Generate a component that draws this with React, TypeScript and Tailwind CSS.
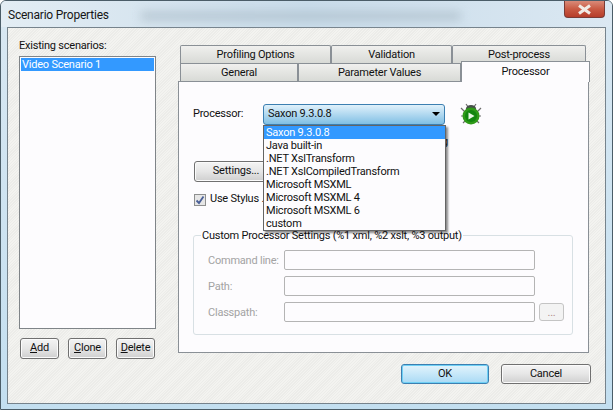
const processors = [
  'Saxon 9.3.0.8',
  'Java built-in',
  '.NET XslTransform',
  '.NET XslCompiledTransform',
  'Microsoft MSXML',
  'Microsoft MSXML 4',
  'Microsoft MSXML 6',
  'custom',
];

const buttonClass =
  'flex items-center justify-center rounded-[3px] border border-[#707070] bg-gradient-to-b from-[#f4f4f4] from-0% via-[#e6e6e6] via-50% to-[#cfcfcf] to-100% text-[11px] text-[#111] shadow-[inset_0_0_0_1px_#fbfbfb]';

const tabClass =
  'flex items-center justify-center border border-b-0 border-[#8a9096] bg-gradient-to-b from-[#f0f0ee] to-[#d8dad6] pt-[2px] text-[11px] text-[#111]';

function BugIcon() {
  return (
    <svg width="22" height="22" viewBox="0 0 22 22" aria-hidden="true">
      <g stroke="#6d6d6d" strokeWidth="1.2" fill="none">
        <path d="M6 1l2.5 3.5M16 1l-2.5 3.5M1 5l4 4M21 5l-4 4M1 13h3M21 13h-3M3 20l3-3M19 20l-3-3" />
      </g>
      <ellipse cx="11" cy="5.5" rx="5" ry="3.5" fill="#47504a" />
      <circle cx="11" cy="13" r="8.5" fill="#2f9a18" />
      <circle cx="11" cy="13" r="6" fill="#12860f" />
      <path d="M8.5 9.5 14.5 13 8.5 16.5Z" fill="#e9f7e4" />
    </svg>
  );
}

function Field({ label, browse }: { label: string; browse?: boolean }) {
  return (
    <div className="flex items-center">
      <span className="w-[90px] flex-none pl-[14px] text-[11px] leading-none whitespace-nowrap text-[#a3a3a3]">{label}</span>
      <div className="h-[20px] w-[251px] rounded-[2px] border border-[#b4b4b4] bg-[#fdfcfe]" />
      {browse && (
        <div className="ml-[4px] flex h-[18px] w-[25px] items-center justify-center rounded-[3px] border border-[#c4c4c4] bg-[#f3f3f3] text-[11px] leading-none text-[#b08a8a]">
          ...
        </div>
      )}
    </div>
  );
}

export default function App() {
  return (
    <div className="flex h-[410px] w-[613px] flex-col overflow-hidden rounded-t-[6px] border border-[#4b5d68] bg-gradient-to-b from-[#d9e8f2] to-[#c3dff0] font-['Roboto',sans-serif] tracking-[-0.22px]">
      {/* 타이틀바 */}
      <div className="relative flex h-[26px] flex-none justify-between bg-gradient-to-r from-[#e3edf4] via-[#c9dcea] to-[#dbe8f2] pl-[7px] pr-[7px]">
        <div className="absolute left-[140px] top-[10px] h-[10px] w-[320px] bg-[#a9bac6] opacity-60 blur-[5px]" />
        <span className="relative pt-[6px] text-[12px] leading-[16px] text-[#161616]">Scenario Properties</span>
        <div className="relative flex h-[17px] w-[41px] items-center justify-center rounded-b-[4px] border border-t-0 border-[#7a3b35] bg-gradient-to-b from-[#d98a78] via-[#c95a43] to-[#b63d2a]">
          <svg width="15" height="11" viewBox="0 0 15 11" aria-hidden="true">
            <path d="M2 1.5 13 9.5M13 1.5 2 9.5" stroke="#f1ebe6" strokeWidth="3" fill="none" />
          </svg>
        </div>
      </div>

      {/* 본문 */}
      <div className="mx-[6px] mb-[5px] flex flex-1 border border-[#76838c] bg-[repeating-linear-gradient(135deg,#f3f3f0_0px,#f3f3f0_1px,#ecece9_1px,#ecece9_2px)] pl-[11px]">
        <div className="flex w-[137px] flex-none flex-col pt-[11px]">
          <span className="h-[14px] text-[11px] leading-[14px] text-[#111]">Existing scenarios:</span>
          <div className="mt-[3px] h-[273px] border border-[#7f8488] bg-[#fdfcfe] p-[1px]">
            <div className="h-[13px] bg-[#3399ff] pl-[1px] text-[11px] leading-[13px] text-white">Video Scenario 1</div>
          </div>
          <div className="mt-[9px] flex gap-[9px] pl-[1px]">
            <button className={`${buttonClass} h-[21px] w-[39px]`}><span><u>A</u>dd</span></button>
            <button className={`${buttonClass} h-[21px] w-[39px]`}><span><u>C</u>lone</span></button>
            <button className={`${buttonClass} h-[21px] w-[39px]`}><span><u>D</u>elete</span></button>
          </div>
        </div>

        <div className="ml-[22px] flex w-[413px] flex-none flex-col pt-[17px]">
          {/* 탭 */}
          <div className="flex h-[18px] pl-[2px]">
            <div className={`${tabClass} w-[151px] rounded-t-[2px]`}>Profiling Options</div>
            <div className={`${tabClass} w-[121px] rounded-t-[2px]`}>Validation</div>
            <div className={`${tabClass} w-[134px] rounded-t-[2px]`}>Post-process</div>
          </div>
          <div className="flex h-[18px] pl-[2px]">
            <div className={`${tabClass} w-[118px]`}>General</div>
            <div className={`${tabClass} w-[163px]`}>Parameter Values</div>
            <div className="relative z-10 -mt-[2px] flex h-[21px] w-[129px] justify-center border border-b-0 border-[#8a9096] bg-[#fdfcfe] pt-[3px] text-[11px] leading-[14px] text-[#111]">Processor</div>
          </div>

          {/* 패널 */}
          <div className="h-[272px] w-[411px] border border-[#8a9096] bg-[#fdfcfe] pt-[21px]">
            <div className="flex items-center pl-[14px]">
              <span className="w-[70px] text-[11px] text-[#111]">Processor:</span>
              <div className="relative h-[21px] w-[182px]">
                <div className="flex h-[21px] items-center justify-between rounded-[3px] border border-[#3c7fb1] bg-gradient-to-b from-[#e0f1fb] to-[#7fbfe4] pl-[4px] pr-[4px] text-[11px] text-[#111]">
                  <span>Saxon 9.3.0.8</span>
                  <span className="h-0 w-0 border-x-[4px] border-t-[4px] border-x-transparent border-t-black" />
                </div>
                <span className="absolute right-[-3px] top-[31px] text-[11px] leading-[13px] text-[#111]">g</span>
                <div className="absolute left-0 top-full z-20 h-[106px] w-[183px] border border-[#646464] bg-[#fdfcfe] shadow-[2px_2px_2px_rgba(0,0,0,0.45)]">
                  {processors.map((p, i) => (
                    <div key={p} className={`h-[13px] pl-[2px] text-[11px] leading-[13px] whitespace-nowrap ${i === 0 ? 'bg-[#3399ff] text-white' : 'text-[#111]'}`}>{p}</div>
                  ))}
                </div>
              </div>
              <div className="ml-[15px]"><BugIcon /></div>
            </div>

            <div className={`${buttonClass} ml-[15px] mt-[36px] h-[21px] w-[84px]`}>Settings...</div>

            <div className="ml-[15px] mt-[11px] flex h-[13px] items-center gap-[4px]">
              <span className="flex h-[12px] w-[12px] items-center justify-center border border-[#8e8f8f] bg-[#e6e6e6]">
                <svg width="10" height="10" viewBox="0 0 10 10" aria-hidden="true">
                  <path d="M1.5 5.5 4 8l4.5-6.5" stroke="#4a5f97" strokeWidth="1.8" fill="none" />
                </svg>
              </span>
              <span className="text-[11px] text-[#111]">Use Stylus .</span>
            </div>

            {/* 그룹박스 */}
            <div className="relative ml-[14px] mt-[29px] flex h-[100px] w-[380px] flex-col rounded-[3px] border border-[#d8e0e4] pt-[14px]">
              <span className="absolute -top-[7px] left-[7px] bg-[#fdfcfe] px-[1px] text-[11px] leading-[13px] whitespace-nowrap text-[#111]">Custom Processor Settings (%1 xml, %2 xslt, %3 output)</span>
              <div className="flex flex-col gap-[6px]">
                <Field label="Command line:" />
                <Field label="Path:" />
                <Field label="Classpath:" browse />
              </div>
            </div>
          </div>

          {/* 하단 버튼 */}
          <div className="mt-[11px] flex justify-end gap-[12px]">
            <button className="h-[20px] w-[88px] rounded-[3px] border border-[#3c7fb1] bg-gradient-to-b from-[#e3f4fc] to-[#a9daf5] text-[11px] text-[#111] shadow-[inset_0_0_0_1px_#6fd0f5]">OK</button>
            <button className={`${buttonClass} h-[20px] w-[90px]`}>Cancel</button>
          </div>
        </div>
      </div>
    </div>
  );
}
